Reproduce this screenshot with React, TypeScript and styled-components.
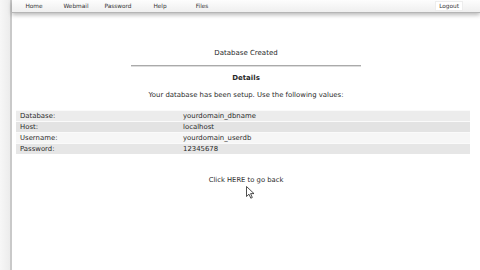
import { createGlobalStyle, styled } from "styled-components";

type RowProps = {
    shade?: string
}

const GlobalStyle = createGlobalStyle`
    html, body {
        margin: 0;
        padding: 0;
        background: #ffffff;
    }
    body {
        font-family: "DejaVu Sans", Verdana, sans-serif;
        color: #2a2a2a;
    }
`

const Page = styled.div`
    display: flex;
    width: 480px;
    height: 270px;
    overflow: hidden;
    position: relative;
`

const LeftRail = styled.div`
    width: 10px;
    background: linear-gradient(90deg, #f7f7f7 0%, #ececec 100%);
    border-right: 2px solid #c9c9c9;
    flex-shrink: 0;
`

const Main = styled.div`
    flex: 1;
    display: flex;
    flex-direction: column;
`

const NavBar = styled.div`
    height: 12px;
    display: flex;
    align-items: center;
    padding-left: 1px;
    background: linear-gradient(180deg, #fdfdfd 0%, #efefef 100%);
    box-shadow: 0 2px 4px rgba(0, 0, 0, 0.28);
    border-bottom: 1px solid #b5b5b5;
`

const NavItem = styled.span`
    width: 42px;
    text-align: center;
    font-size: 5.8px;
    color: #333;
`

const Logout = styled.span`
    margin-left: auto;
    margin-right: 17px;
    font-size: 5.8px;
    color: #333;
    background: #fff;
    padding: 1px 3px;
    border: 1px solid #ededed;
`

const Content = styled.div`
    display: flex;
    flex-direction: column;
    align-items: center;
    padding-top: 34px;
`

const Title = styled.div`
    font-size: 7px;
    height: 12px;
    line-height: 12px;
`

const Rule = styled.div`
    width: 230px;
    height: 1px;
    background: #aaa;
    border-bottom: 1px solid #ddd;
    margin-top: 6px;
`

const Heading = styled.div`
    font-size: 7px;
    font-weight: bold;
    margin-top: 5px;
    height: 12px;
    line-height: 12px;
`

const Note = styled.div`
    font-size: 6.9px;
    margin-top: 5px;
    height: 12px;
    line-height: 12px;
`

const Table = styled.div`
    align-self: stretch;
    margin: 9px 10px 0 4px;
    display: flex;
    flex-direction: column;
`

const Row = styled.div<RowProps>`
    display: grid;
    grid-template-columns: 167px 1fr;
    height: 10px;
    border-top: 1px solid #fafafa;
    background: ${props => props.shade || "#eee"};
    font-size: 6.9px;
    line-height: 10px;
`

const Label = styled.span`
    padding-left: 4px;
`

const Value = styled.span`
    white-space: nowrap;
`

const Back = styled.div`
    font-size: 6.8px;
    margin-top: 20px;
    height: 12px;
    line-height: 12px;
`

const Cursor = styled.svg`
    position: absolute;
    left: 246px;
    top: 186px;
`

const rows = [
    { label: "Database:", value: "yourdomain_dbname", shade: "#ececec" },
    { label: "Host:", value: "localhost", shade: "#e3e3e3" },
    { label: "Username:", value: "yourdomain_userdb", shade: "#f6f6f6" },
    { label: "Password:", value: "12345678", shade: "#e6e6e6" },
]

export default function App() {
    return (
        <Page>
            <GlobalStyle />
            <LeftRail />
            <Main>
                <NavBar>
                    <NavItem>Home</NavItem>
                    <NavItem>Webmail</NavItem>
                    <NavItem>Password</NavItem>
                    <NavItem>Help</NavItem>
                    <NavItem>Files</NavItem>
                    <Logout>Logout</Logout>
                </NavBar>
                <Content>
                    <Title>Database Created</Title>
                    <Rule />
                    <Heading>Details</Heading>
                    <Note>Your database has been setup. Use the following values:</Note>
                    <Table>
                        {rows.map(r => (
                            <Row key={r.label} shade={r.shade}>
                                <Label>{r.label}</Label>
                                <Value>{r.value}</Value>
                            </Row>
                        ))}
                    </Table>
                    <Back>Click HERE to go back</Back>
                </Content>
            </Main>
            <Cursor width="9" height="13" viewBox="0 0 9 13">
                <path d="M0.5 0.5 L0.5 10.5 L3 8.2 L4.8 12.2 L6.3 11.5 L4.6 7.6 L8 7.6 Z" fill="#fff" stroke="#222" strokeWidth="0.8" strokeLinejoin="round" />
            </Cursor>
        </Page>
    );
}
